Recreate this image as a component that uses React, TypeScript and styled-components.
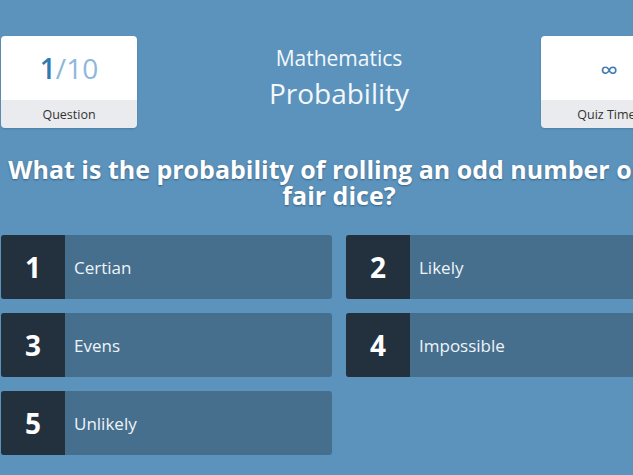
import React from 'react';
import styled, { createGlobalStyle } from 'styled-components';

const GlobalStyle = createGlobalStyle`
  html, body {
    margin: 0;
    padding: 0;
    background: #5b93bd;
    overflow: hidden;
    font-family: 'Open Sans', 'Noto Sans', sans-serif;
  }
`;

const Page = styled.div`
  width: 676px;
  margin-left: 1px;
  padding-top: 36px;
  box-sizing: border-box;
`;

const Header = styled.div`
  display: flex;
  justify-content: space-between;
  align-items: flex-start;
`;

const Card = styled.div`
  width: 136px;
  height: 92px;
  border-radius: 4px;
  overflow: hidden;
  display: flex;
  flex-direction: column;
  box-shadow: 0 1px 2px rgba(0, 0, 0, 0.15);
`;

const CardTop = styled.div`
  height: 64px;
  background: #ffffff;
  display: flex;
  align-items: center;
  justify-content: center;
  font-size: 28px;
  color: #8cb8dc;
`;

const Strong = styled.span`
  color: #2f7ab4;
  font-weight: 600;
`;

const Infinity = styled.span`
  font-size: 25px;
  line-height: 1;
  color: #3a78b0;
  margin-top: 2px;
`;

const CardLabel = styled.div`
  flex: 1;
  background: #e9ebee;
  display: flex;
  align-items: center;
  justify-content: center;
  font-size: 12.5px;
  color: #333;
`;

const Titles = styled.div`
  display: flex;
  flex-direction: column;
  align-items: center;
  color: #f4f8fb;
  padding-top: 7px;
`;

const Subject = styled.div`
  font-size: 21px;
  line-height: 30px;
`;

const Topic = styled.div`
  font-size: 28px;
  line-height: 40px;
`;

const Question = styled.h1`
  margin: 28px 0 0;
  text-align: center;
  font-size: 25px;
  line-height: 26px;
  font-weight: 700;
  color: #ffffff;
  text-shadow: 0 1px 2px rgba(0, 0, 0, 0.35);
`;

const Answers = styled.div`
  display: grid;
  grid-template-columns: 1fr 1fr;
  gap: 14px;
  margin-top: 27px;
`;

const Answer = styled.div`
  height: 64px;
  display: flex;
  border-radius: 3px;
  overflow: hidden;
  background: #466f8d;
`;

const Num = styled.div`
  width: 64px;
  background: #23313f;
  color: #ffffff;
  font-weight: 700;
  font-size: 28px;
  display: flex;
  align-items: center;
  justify-content: center;
`;

const Label = styled.div`
  display: flex;
  align-items: center;
  padding-left: 9px;
  font-size: 17px;
  color: #eef4f9;
`;

const answers = ['Certian', 'Likely', 'Evens', 'Impossible', 'Unlikely'];

export default function App() {
  return (
    <Page>
      <GlobalStyle />
      <Header>
        <Card>
          <CardTop>
            <Strong>1</Strong>/10
          </CardTop>
          <CardLabel>Question</CardLabel>
        </Card>
        <Titles>
          <Subject>Mathematics</Subject>
          <Topic>Probability</Topic>
        </Titles>
        <Card>
          <CardTop>
            <Infinity>∞</Infinity>
          </CardTop>
          <CardLabel>Quiz Timer</CardLabel>
        </Card>
      </Header>
      <Question>
        What is the probability of rolling an odd number on a fair dice?
      </Question>
      <Answers>
        {answers.map((a, i) => (
          <Answer key={a}>
            <Num>{i + 1}</Num>
            <Label>{a}</Label>
          </Answer>
        ))}
      </Answers>
    </Page>
  );
}
